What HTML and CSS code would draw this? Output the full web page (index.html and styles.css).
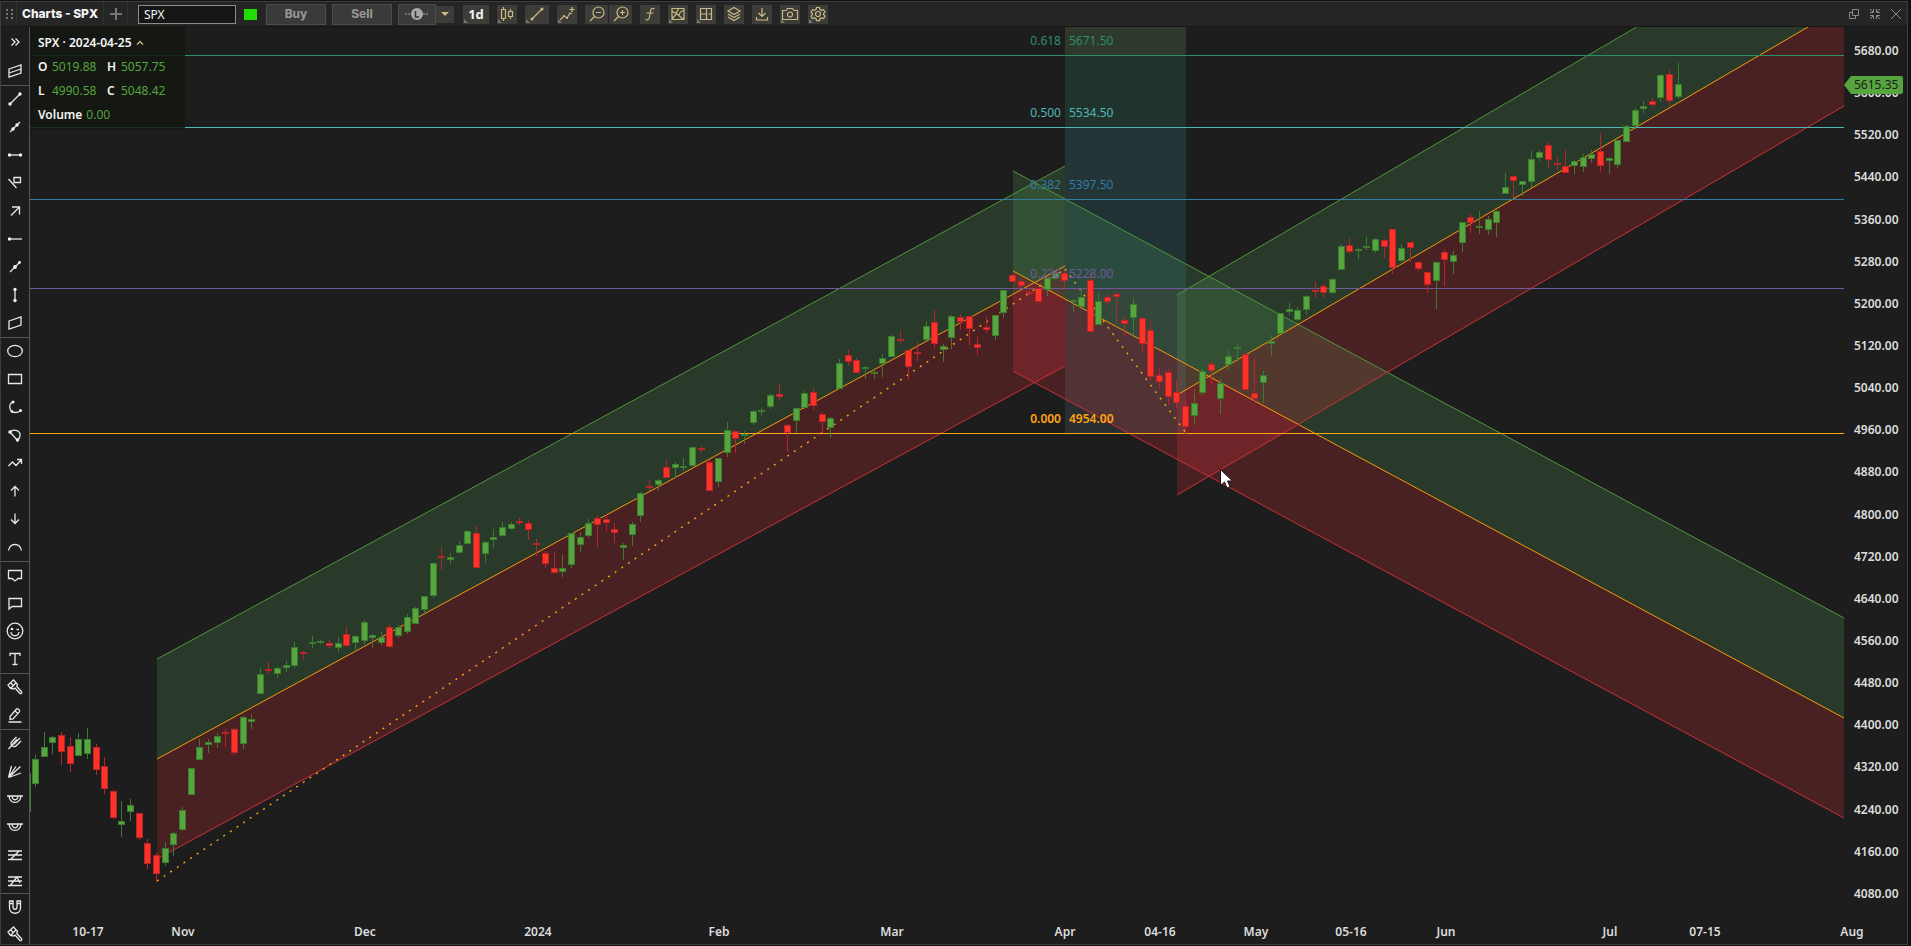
FILE: index.html
```html
<!DOCTYPE html>
<html lang="en">
<head>
<meta charset="utf-8">
<title>Charts - SPX</title>
<link rel="stylesheet" href="styles.css">
</head>
<body>
<div class="window">
  <header class="toolbar">
    <div class="tabs">
      <svg class="grip" width="8" height="12" viewBox="0 0 8 12"><path d="M0 1h2v2H0zM5 1h2v2H5zM0 5h2v2H0zM5 5h2v2H5zM0 9h2v2H0zM5 9h2v2H5z"/></svg>
      <h1 class="title">Charts - SPX</h1>
      <button class="add" aria-label="Add tab"><svg width="12" height="12" viewBox="0 0 12 12"><path d="M6 0v12M0 6h12"/></svg></button>
    </div>
    <input class="symbol" type="text" value="SPX" aria-label="Symbol">
    <span class="status"></span>
    <div class="trade">
      <button class="order">Buy</button>
      <button class="order">Sell</button>
      <div class="split">
        <button class="order limit" aria-label="Limit order"><svg width="24" height="12" viewBox="0 0 24 12"><path class="dash" d="M0 6h6M18 6h6"/><circle cx="12" cy="6" r="6"/><path class="mark" d="M10.500 3v6h3.500"/></svg></button>
        <button class="tool drop" aria-label="Order types"><svg width="8" height="4" viewBox="0 0 8 4"><path class="solid" d="M0 0h8L4 4z"/></svg></button>
      </div>
    </div>
    <div class="tools">
      <button class="tool period corner">1d</button>
      <button class="tool corner" aria-label="Chart type"><svg width="16" height="16" viewBox="0 0 16 16"><path d="M2.500 3.500h4v9h-4zM4.500 1v2.500M4.500 12.500V15M9.500 5.500h4v5h-4zM11.500 3v2.500M11.500 10.500V13"/></svg></button>
      <button class="tool line corner" aria-label="Draw line"><svg width="16" height="16" viewBox="0 0 16 16"><path d="M3 13L13 3"/><circle class="solid" cx="3" cy="13" r="1.500"/><circle class="solid" cx="13" cy="3" r="1.500"/></svg></button>
      <button class="tool corner" aria-label="Indicators"><svg width="16" height="16" viewBox="0 0 16 16"><path d="M1 14l4-4 3 2 3-5 2 1M13 1v5M10.500 3.500h5"/><circle class="solid" cx="5" cy="10" r="1"/><circle class="solid" cx="8" cy="12" r="1"/></svg></button>
      <div class="pair">
        <button class="tool wide" aria-label="Zoom out"><svg width="16" height="16" viewBox="0 0 16 16"><circle cx="9.500" cy="6.500" r="5.500"/><path d="M5.500 10.500l-4.500 4.500M7 6.500h5"/></svg></button>
        <button class="tool wide" aria-label="Zoom in"><svg width="16" height="16" viewBox="0 0 16 16"><circle cx="9.500" cy="6.500" r="5.500"/><path d="M5.500 10.500l-4.500 4.500M7 6.500h5M9.500 4v5"/></svg></button>
      </div>
      <button class="tool" aria-label="Functions"><svg width="16" height="16" viewBox="0 0 16 16"><path d="M12.500 3c-2-1.500-3.500-.5-4 2L7.500 11c-.5 2.500-2 3.500-4 2.500M4.500 7h7"/></svg></button>
      <button class="tool corner" aria-label="Images"><svg width="16" height="16" viewBox="0 0 16 16"><path d="M2 2.500h12v11H2zM2 13l4.500-5.500 7 6M2.500 5c2 3 4 3 6-2.500M9 9c1-3 2.500-4.500 5-4.500"/></svg></button>
      <button class="tool corner" aria-label="Layout"><svg width="16" height="16" viewBox="0 0 16 16"><path d="M2.500 2.500h11v11h-11zM8.500 2.500v11M2.500 8h6M10.500 8h3"/></svg></button>
      <button class="tool" aria-label="Layers"><svg width="16" height="16" viewBox="0 0 16 16"><path d="M8 1.500l6 3.500-6 3.500L2 5zM2 8l6 3.500L14 8M2 11l6 3.500 6-3.500"/></svg></button>
      <button class="tool" aria-label="Download"><svg width="16" height="16" viewBox="0 0 16 16"><path d="M8 2v8.500M4.500 7L8 10.500 11.500 7M2.500 11v3h11v-3"/></svg></button>
      <button class="tool corner" aria-label="Snapshot"><svg width="18" height="16" viewBox="0 0 18 16"><path d="M1.500 4.500H5L6.500 2.500h5L13 4.500h3.500v9h-15z"/><circle cx="9" cy="8.500" r="2.500"/></svg></button>
      <button class="tool corner" aria-label="Settings"><svg width="16" height="16" viewBox="0 0 16 16"><path d="M6.500 1.500h3l.5 2 1.500.8 2-.6 1.500 2.500-1.500 1.400v1l1.500 1.400-1.500 2.500-2-.6-1.500.8-.5 2h-3l-.5-2-1.500-.8-2 .6L1 10l1.500-1.400v-1L1 6.200l1.500-2.500 2 .6L6 3.500z"/><circle cx="8" cy="8" r="2.500"/></svg></button>
    </div>
    <div class="controls">
      <button aria-label="Restore"><svg width="12" height="12" viewBox="0 0 12 12"><path d="M4.500 1.500h6v6h-6zM4.500 4.500h-3v6h6v-3"/></svg></button>
      <button aria-label="Collapse"><svg width="12" height="12" viewBox="0 0 12 12"><path d="M1 1l3 3M4.500 1v3.500H1M11 1L8 4M7.500 1v3.500H11M1 11l3-3M1 7.500h3.500V11M11 11L8 8M7.500 11V7.500H11"/></svg></button>
      <button aria-label="Close"><svg width="12" height="12" viewBox="0 0 12 12"><path d="M1 1l10 10M11 1L1 11"/></svg></button>
    </div>
  </header>

  <div class="workspace">
    <nav class="sidebar" aria-label="Drawing tools">
      <div class="group">
        <button aria-label="Expand"><svg viewBox="0 0 16 16"><path d="M4.500 4.500L8 8l-3.500 3.500M8.500 4.500L12 8l-3.500 3.500"/></svg></button>
        <button aria-label="Regression channel"><svg viewBox="0 0 16 16"><path d="M2 6l12-4v8L2 14zM2 10l12-4"/></svg></button>
      </div>
      <div class="group">
        <button aria-label="Segment"><svg viewBox="0 0 16 16"><path d="M3 13L13 3"/><circle class="dot" cx="3" cy="13" r="1.700"/><circle class="dot" cx="13" cy="3" r="1.700"/></svg></button>
        <button aria-label="Extended line"><svg viewBox="0 0 16 16"><path d="M3 13L13 3"/><circle class="dot" cx="6" cy="10" r="1.700"/><circle class="dot" cx="10" cy="6" r="1.700"/></svg></button>
        <button aria-label="Horizontal segment"><svg viewBox="0 0 16 16"><path d="M2 8h12"/><circle class="dot" cx="2.500" cy="8" r="1.700"/><circle class="dot" cx="13.500" cy="8" r="1.700"/></svg></button>
        <button aria-label="Line with label"><svg viewBox="0 0 16 16"><path d="M1.500 4l8 9M7 2.500h6.500v5H7z"/></svg></button>
        <button aria-label="Arrow"><svg viewBox="0 0 16 16"><path d="M4 12.500l8-8M5 4h7.500v7.500"/></svg></button>
        <button aria-label="Ray"><svg viewBox="0 0 16 16"><path d="M2 8h13"/><circle class="dot" cx="2.500" cy="8" r="1.700"/></svg></button>
        <button aria-label="Infinite line"><svg viewBox="0 0 16 16"><path d="M3 13L13 3"/><circle class="dot" cx="8" cy="8" r="1.900"/><circle class="dot" cx="12.500" cy="3.500" r="1.400"/></svg></button>
        <button aria-label="Vertical segment"><svg viewBox="0 0 16 16"><path d="M8 2v12"/><circle class="dot" cx="8" cy="2.500" r="1.700"/><circle class="dot" cx="8" cy="13.500" r="1.700"/></svg></button>
        <button aria-label="Parallel channel"><svg viewBox="0 0 16 16"><path d="M2 6l12-4v8L2 14z"/></svg></button>
      </div>
      <div class="group">
        <button aria-label="Ellipse"><svg viewBox="0 0 16 16"><ellipse cx="8" cy="8" rx="7.300" ry="5.700"/></svg></button>
        <button aria-label="Rectangle"><svg viewBox="0 0 16 16"><path d="M1.500 3.500h13v9h-13z"/></svg></button>
        <button aria-label="Arc"><svg viewBox="0 0 16 16"><path d="M6 3C1 5 2 13 8 13.500c3 0 4.500-.5 5.500-2"/><circle class="dot" cx="6" cy="3" r="1.500"/><circle class="dot" cx="13.500" cy="11.500" r="1.500"/><circle class="dot" cx="5" cy="12.500" r="1.300"/></svg></button>
        <button aria-label="Curve"><svg viewBox="0 0 16 16"><path d="M3 5c4-4 11-1 10 4-.5 2-1 3-2.500 4.500z"/><circle class="dot" cx="3" cy="5" r="1.700"/><circle class="dot" cx="10.500" cy="13" r="1.700"/></svg></button>
        <button aria-label="Zigzag"><svg viewBox="0 0 16 16"><path d="M1.500 11l4-4 3.500 3.500L14 5M10 4.500h4.500V9"/></svg></button>
        <button aria-label="Arrow up"><svg viewBox="0 0 16 16"><path d="M8 13.500v-10M4 7.500l4-4 4 4"/></svg></button>
        <button aria-label="Arrow down"><svg viewBox="0 0 16 16"><path d="M8 2.500v10M4 8.500l4 4 4-4"/></svg></button>
        <button aria-label="Half circle"><svg viewBox="0 0 16 16"><path d="M1.500 11.500c1.500-8 11.500-8 13 0"/></svg></button>
      </div>
      <div class="group">
        <button aria-label="Callout"><svg viewBox="0 0 16 16"><path d="M1.500 3.500h13v8H11l-3 2.500-3-2.500H1.500z"/></svg></button>
        <button aria-label="Comment"><svg viewBox="0 0 16 16"><path d="M2 3.500h12.500v8H5L2 14z"/></svg></button>
        <button aria-label="Emoji"><svg class="large" viewBox="0 0 18 18"><circle cx="9" cy="9" r="7.800"/><path d="M5 10c.5 5 7.500 5 8 0M10.500 7.500H13"/><circle class="dot" cx="6" cy="7" r="1.300"/></svg></button>
        <button aria-label="Text"><svg viewBox="0 0 16 16"><path d="M3 5V2.500h10V5M8 2.500v11M5.500 13.500h5"/></svg></button>
      </div>
      <div class="group">
        <button aria-label="Brush"><svg viewBox="0 0 16 16"><path d="M1 6l2.500 3.500 3 .5 1.500-1 4.500 5c1.500 1.500 3-.2 1.800-1.500L9.800 7.500l.7-2L6.500 1zM3.500 9.500L9 3.800M3.500 3.500l2.500 3"/></svg></button>
        <button aria-label="Edit"><svg viewBox="0 0 16 16"><path d="M3 12.500V9.500l6.500-7.500c1-1 4 1.500 3 2.700L6 12zM8 4l3.200 2.800M1.500 15h13"/></svg></button>
      </div>
      <div class="group">
        <button aria-label="Pitchfork"><svg viewBox="0 0 16 16"><path d="M1.500 14L10 4.500M9.500 2L5 6.500c-2 2-1 3 0 4s2.500 2 4.500 0L14 6M6.500 9.500L13 3"/></svg></button>
        <button aria-label="Fan"><svg viewBox="0 0 16 16"><path d="M1.500 14.500L4.500 3M1.500 14.500L9 3.500M1.500 14.500l12-11M1.500 14.500L14 10"/></svg></button>
        <button aria-label="Arcs"><svg viewBox="0 0 16 16"><path d="M0 5h16M2 5c1 8.500 11 8.500 12 0M5 5c.5 5 5.500 5 6 0"/></svg></button>
        <button aria-label="Circles"><svg viewBox="0 0 16 16"><path d="M0 5h16M2 5c1 8.500 11 8.500 12 0M5 5c.5 5 5.500 5 6 0"/></svg></button>
        <button aria-label="Retracement"><svg viewBox="0 0 16 16"><path d="M1 4h14M1 8h14M1 12.500h14M4 12L12 4"/></svg></button>
        <button class="short" aria-label="Extension"><svg viewBox="0 0 16 16"><path d="M1 4h14M1 8h14M1 12.500h14M3.500 12L10 4l3 6"/></svg></button>
      </div>
      <div class="group">
        <button aria-label="Magnet"><svg viewBox="0 0 16 16"><path d="M2.500 2h3.500v6c0 3 4 3 4 0V2h3.500v7c0 7-11 7-11 0zM2.500 4.500H6M10 4.500h3.500"/></svg></button>
        <button aria-label="Clear"><svg viewBox="0 0 16 16"><path d="M1 6l2.500 3.500 3 .5 1.500-1 4.500 5c1.500 1.500 3-.2 1.800-1.500L9.800 7.500l.7-2L6.500 1zM3.500 9.500L9 3.800M3.500 3.500l2.500 3"/></svg></button>
      </div>
    </nav>

    <main class="chart">
      <div class="panes">
        <div class="plot">
          <svg id="plot" class="canvas"></svg>
          <section class="legend">
            <h2>SPX · 2024-04-25 <svg width="8" height="6" viewBox="0 0 8 6"><path d="M1 4.500l3-3 3 3"/></svg></h2>
            <dl>
              <div><dt>O</dt><dd>5019.88</dd></div>
              <div><dt>H</dt><dd>5057.75</dd></div>
              <div><dt>L</dt><dd>4990.58</dd></div>
              <div><dt>C</dt><dd>5048.42</dd></div>
              <div class="volume"><dt>Volume</dt><dd>0.00</dd></div>
            </dl>
          </section>
        </div>
        <aside class="prices">
          <div id="prices" class="scale"></div>
          <div class="tag"><svg width="7" height="18" viewBox="0 0 7 18"><path d="M7 0L0 9l7 9z"/></svg><span>5615.35</span></div>
        </aside>
      </div>
      <div id="times" class="times"></div>
    </main>
  </div>
</div>
<script src="chart.js"></script>
</body>
</html>
```
FILE: styles.css
```css
* { box-sizing: border-box; }

body {
  margin: 0;
  height: 100vh;
  padding: 1px 3px 1px 0;
  background: #131313;
  color: #f4f4f4;
  font: 12px/16px "Noto Sans", "Open Sans", sans-serif;
  overflow: hidden;
}

button {
  margin: 0;
  padding: 0;
  border: 0;
  background: none;
  color: inherit;
  font: inherit;
  display: flex;
  align-items: center;
  justify-content: center;
}

svg { display: block; fill: none; }
h1, h2, dl, dd { margin: 0; font-size: 12px; }

.window {
  height: 100%;
  display: flex;
  flex-direction: column;
  border: 1px solid #3c3c3c;
  background: #1d1d1d;
}

/* Toolbar */
.toolbar {
  height: 25px;
  flex: none;
  display: flex;
  align-items: center;
  border-bottom: 1px solid #151515;
  background: #252525;
}
.tabs { display: flex; align-items: center; height: 100%; width: 137px; flex: none; }
.grip { margin-left: 5px; fill: #777; flex: none; }
.title {
  margin-left: 2px;
  padding: 0 5px;
  line-height: 24px;
  font-family: Inter, sans-serif;
  font-weight: 800;
  white-space: nowrap;
  border: solid #2c3432;
  border-width: 0 1px;
}
.add { width: 24px; height: 24px; border-right: 1px solid #2c3432; }
.add svg { stroke: #777; stroke-width: 2; }
.symbol {
  width: 98px;
  height: 19px;
  padding: 0 5px;
  border: 1px solid #8c8c8c;
  background: #151515;
  color: #f4f4f4;
  font: 12px/16px "Noto Sans", sans-serif;
}
.status { width: 13px; height: 11px; margin: 0 9px 0 8px; background: #22dd00; }
.trade { display: flex; align-items: center; gap: 6px; }
.order {
  width: 60px;
  height: 21px;
  border: 1px solid #4c4c4c;
  background: #3a3a3a;
  color: #9a9a9a;
  font: 700 12px/16px Inter, sans-serif;
}
.split { display: flex; align-items: center; }
.limit { width: 38px; }
.limit circle { fill: #aaa; }
.limit .dash { stroke: #aaa; stroke-dasharray: 2 1; }
.limit .mark { stroke: #333; stroke-width: 1.5; }
.tools { display: flex; gap: 8px; margin-left: 9px; }
.pair { display: flex; gap: 1px; }
.tool {
  position: relative;
  width: 20px;
  height: 19px;
  background: #3c3d39;
}
.tool svg { stroke: #cdb985; stroke-width: 1.2; }
.tool .solid { fill: #cdb985; stroke: none; }
.tool.wide { width: 23px; }
.tool.line { width: 24px; }
.drop { width: 18px; height: 17px; }
.period { width: 26px; font-weight: 700; font-size: 13px; }
.corner::after {
  content: "";
  position: absolute;
  left: 1px;
  bottom: 1px;
  border: 2px solid transparent;
  border-left-color: #777;
  border-bottom-color: #777;
}
.controls { display: flex; gap: 9px; margin-left: auto; padding-right: 5px; }
.controls svg { stroke: #8c8c8c; }

/* Drawing tools */
.workspace { flex: 1; min-height: 0; display: flex; }
.sidebar { width: 29px; flex: none; border-right: 1px solid #555; }
.group { border-bottom: 1px solid #555; margin-bottom: -1px; }
.group:last-child { border-bottom: 0; }
.group button { width: 28px; height: 28px; }
.group:first-child button { height: 29px; }
.group:last-child button { height: 27px; }
.group .short { height: 24px; }
.group svg { width: 16px; height: 16px; stroke: #e8e8e8; stroke-width: 1.3; }
.group .large { width: 18px; height: 18px; }
.group .dot { fill: #f4f4f4; stroke: none; }

/* Chart */
.chart { flex: 1; min-width: 0; display: flex; flex-direction: column; }
.panes { flex: 1; min-height: 0; display: flex; }
.plot { position: relative; flex: 1; min-width: 0; }
.canvas { width: 100%; height: 100%; position: absolute; }
.canvas text { font: 12px "Noto Sans", sans-serif; }
.canvas .base { font-weight: 600; }
.up { fill: rgba(90, 175, 95, 0.2); }
.down { fill: rgba(255, 48, 60, 0.2); }
.edge { stroke-width: 1; }
.upper { stroke: #4f963e; }
.middle { stroke: #f59b0c; }
.lower { stroke: #cc3038; }
.trend { stroke: #ffa510; stroke-width: 1.4; stroke-dasharray: 2 6; }
.candles { shape-rendering: crispEdges; }
.bull { fill: #3c7a30; }
.bull-body { fill: #56a53e; }
.bear { fill: #b8242c; }
.bear-body { fill: #ff3228; }
.cursor { fill: #fff; stroke: #111; }

.legend {
  position: absolute;
  top: 0;
  left: 0;
  width: 155px;
  height: 103px;
  padding: 4px 8px;
  background: rgba(20, 22, 18, 0.85);
  line-height: 24px;
}
.legend h2 { display: flex; align-items: center; gap: 4px; font-weight: 600; }
.legend h2 svg { stroke: #cdb985; stroke-width: 1.4; }
.legend dl { display: grid; grid-template-columns: 69px 69px; }
.legend dl div { display: flex; gap: 4px; }
.legend .volume { grid-column: span 2; }
.legend dt { font-weight: 600; min-width: 10px; }
.legend dd { color: #56a53e; }

.prices { position: relative; width: 63px; flex: none; }
.scale {
  height: 100%;
  padding: 16px 0 14px 10px;
  display: flex;
  flex-direction: column;
  justify-content: space-between;
  font-weight: 600;
  color: #dcdcdc;
}
.tag {
  position: absolute;
  top: 49px;
  left: 0;
  display: flex;
}
.tag svg { fill: #56a53e; }
.tag span {
  width: 52px;
  padding-left: 3px;
  line-height: 18px;
  border-radius: 0 2px 2px 0;
  background: #56a53e;
  color: #1d1d1d;
}
.times {
  position: relative;
  height: 28px;
  margin-right: 63px;
  flex: none;
  font-weight: 600;
  color: #dcdcdc;
}
.times span {
  position: absolute;
  top: 8px;
  transform: translateX(-50%);
}
```
FILE: chart.js
```js
const VIEW = { x: 30, y: 27, w: 1814, h: 889 };
const STEP = 8.646;
const FIRST = 35.5;

// Each candle: direction, high, body top, body bottom, low
const candles = `
g 755 759 784 787|g 732 747 757 757|g 736 737 743 754|r 732 735 752 765|r 737 746 764 772
g 733 739 756 756|g 728 739 754 759|r 744 747 770 775|r 757 766 789 794|r 790 791 818 819
g 801 821 825 837|g 799 805 812 821|r 813 813 838 840|r 839 843 864 869|r 853 855 874 882
g 842 848 863 866|g 832 833 845 856|g 807 810 830 831|g 768 768 795 795|g 739 747 760 760
g 739 742 745 753|g 733 736 743 748|r 729 732 734 747|r 728 729 753 755|g 716 717 744 749
g 714 719 722 729|g 668 674 694 694|r 662 669 671 674|g 667 668 674 678|g 661 665 668 672
g 642 647 666 668|r 651 652 654 659|g 636 642 644 648|g 640 641 643 644|r 640 643 646 648
g 637 643 648 652|r 627 634 646 647|g 635 636 643 652|g 620 622 641 644|g 634 635 638 648
g 632 637 643 645|r 624 627 647 649|g 625 627 636 638|g 614 617 632 634|g 607 608 624 624
g 596 596 610 615|g 562 563 596 598|r 547 556 558 570|g 553 557 560 564|g 541 545 553 553
g 530 531 544 544|r 526 533 568 568|g 541 542 554 563|g 529 537 540 548|g 522 527 536 536
g 522 524 529 530|r 518 521 523 525|r 520 523 530 540|r 539 543 545 556|r 551 553 564 568
r 553 568 573 573|g 555 568 572 577|g 533 533 565 568|g 532 537 545 552|g 519 523 536 538
r 515 518 525 547|r 514 519 523 531|r 523 529 533 543|g 543 545 548 560|g 522 524 535 546
g 492 493 516 522|r 479 486 488 491|g 479 480 485 491|r 460 467 478 478|g 462 464 468 478
g 458 466 468 471|g 447 447 466 467|r 446 448 450 453|r 460 462 491 491|g 458 458 482 487
g 422 430 453 457|r 431 431 439 453|g 431 434 436 444|g 410 411 423 425|g 408 410 412 416
g 394 395 407 409|r 384 394 397 400|r 424 425 433 452|g 408 408 421 433|g 391 393 408 409
r 388 392 406 410|r 412 414 422 433|g 417 418 428 438|g 359 363 389 389|r 350 355 362 366
r 358 360 373 373|g 366 367 369 379|g 368 372 374 379|g 354 358 364 377|g 335 336 357 357
r 331 339 341 343|r 349 350 367 380|r 342 352 354 361|g 321 326 340 340|r 310 322 344 348
g 344 346 350 362|g 315 316 338 349|r 314 317 322 330|r 316 316 329 345|r 337 344 348 355
r 316 327 330 333|g 315 315 336 340|g 290 290 313 318|r 273 275 282 282|r 279 281 286 288
r 288 292 294 295|r 288 288 302 302|g 277 278 290 296|g 272 273 279 279|r 271 273 281 289
g 299 300 302 312|g 289 297 307 307|r 274 280 332 332|g 293 301 325 325|r 294 297 302 305
r 291 294 297 324|r 316 320 324 336|g 298 304 318 337|r 317 318 344 352|r 321 330 377 381
r 367 375 382 388|r 369 372 397 405|r 380 392 403 409|r 399 406 427 434|g 389 403 416 425
g 369 371 393 395|r 361 364 371 384|g 379 383 399 414|g 349 356 365 370|g 345 347 349 362
r 351 354 390 390|r 358 393 399 402|g 371 375 383 403|g 335 341 344 356|g 313 313 334 334
g 303 309 312 315|g 307 310 320 321|g 295 296 310 315|r 282 290 292 298|r 284 286 293 298
g 278 279 293 294|g 244 246 270 270|r 238 245 252 254|g 248 249 251 259|g 237 246 248 250
g 238 239 251 253|r 239 240 247 258|r 229 229 268 274|g 244 248 261 262|r 242 242 248 262
r 261 262 269 271|r 272 272 285 293|g 261 262 281 309|r 249 252 260 286|g 251 255 262 274
g 222 222 243 252|r 214 217 223 233|g 211 226 228 234|g 216 219 230 235|g 210 211 223 237
g 173 187 194 194|r 175 176 181 198|g 181 181 185 196|g 151 159 182 188|g 150 152 158 161
r 142 145 160 169|r 157 163 165 170|r 150 166 173 173|g 160 161 166 174|g 154 157 167 172
g 150 154 159 163|r 133 151 166 172|g 157 158 161 174|g 140 140 165 168|g 125 126 142 142
g 108 110 126 129|g 101 106 109 113|r 98 101 105 107|g 74 75 98 101|r 70 74 101 106
g 63 84 97 99`.trim().split(/[|\n]/).map(row => row.trim().split(" "));

// Channels: start x, upper y at start, end x, upper y at end; bands are 100 deep each
const channels = [
  [157, 659, 1065, 166],
  [1013, 171, 1844, 618],
  [1177, 295, 1844, -94]
];

const levels = [
  { ratio: "0.618", price: "5671.50", y: 55, color: "#2c9066" },
  { ratio: "0.500", price: "5534.50", y: 127, color: "#4fb8b4" },
  { ratio: "0.382", price: "5397.50", y: 199, color: "#337ca6" },
  { ratio: "0.236", price: "5228.00", y: 288, color: "#70589c" },
  { ratio: "0.000", price: "4954.00", y: 433, color: "#ffa510", cls: "base" }
];
const zones = [
  [27, 55, "150,220,130"],
  [55, 127, "55,180,140"],
  [127, 199, "80,195,205"],
  [199, 288, "60,175,190"],
  [288, 433, "120,150,160"]
];

let art = "";
const line = (cls, x1, y1, x2, y2) =>
  `<line class="${cls}" x1="${x1}" y1="${y1}" x2="${x2}" y2="${y2}"/>`;

for (const [x1, y1, x2, y2] of channels) {
  const band = (cls, d) =>
    `<polygon class="${cls}" points="${x1},${y1 + d} ${x2},${y2 + d} ${x2},${y2 + d + 100} ${x1},${y1 + d + 100}"/>`;
  art += band("up", 0) + band("down", 100);
}
for (const [top, bottom, rgb] of zones) {
  art += `<rect x="1065" y="${top}" width="121" height="${bottom - top}" fill="rgba(${rgb},0.15)"/>`;
}
for (const [x1, y1, x2, y2] of channels) {
  art += line("edge upper", x1, y1, x2, y2);
  art += line("edge middle", x1, y1 + 100, x2, y2 + 100);
  art += line("edge lower", x1, y1 + 200, x2, y2 + 200);
}
art += line("trend", 157, 881, 1065, 269) + line("trend", 1065, 269, 1186, 433);
for (const { y, color } of levels) {
  art += `<rect x="30" y="${y}" width="1814" height="1" fill="${color}"/>`;
}

art += '<g class="candles"><rect class="bull" x="30" y="773" width="1" height="39"/>';
candles.forEach(([dir, high, top, bottom, low], i) => {
  const cls = dir === "g" ? "bull" : "bear";
  const x = Math.floor(FIRST + STEP * i);
  art += `<rect class="${cls}" x="${x}" y="${high}" width="1" height="${low - high}"/>`;
  art += `<rect class="${cls}" x="${x - 3}" y="${top}" width="7" height="${bottom - top}"/>`;
  if (bottom - top > 2) {
    art += `<rect class="${cls}-body" x="${x - 2}" y="${+top + 1}" width="5" height="${bottom - top - 2}"/>`;
  }
});
art += "</g>";
art += '<path class="cursor" d="M1220.500 469.500v16l4-3.500 2.500 6 3-1.500-2.500-5.500h5z"/>';

const px = x => ((x - VIEW.x) / VIEW.w * 100).toFixed(3) + "%";
const py = y => ((y - VIEW.y) / VIEW.h * 100).toFixed(3) + "%";
const labels = levels.map(({ ratio, price, y, color, cls = "level" }) =>
  `<text class="${cls}" x="${px(1061)}" y="${py(y - 10)}" text-anchor="end" fill="${color}">${ratio}</text>` +
  `<text class="${cls}" x="${px(1069)}" y="${py(y - 10)}" fill="${color}">${price}</text>`).join("");

document.getElementById("plot").innerHTML =
  `<svg width="100%" height="100%" viewBox="${VIEW.x} ${VIEW.y} ${VIEW.w} ${VIEW.h}" preserveAspectRatio="none">${art}</svg>${labels}`;

let scale = "";
for (let p = 5680; p >= 4080; p -= 80) scale += `<span>${p}.00</span>`;
document.getElementById("prices").innerHTML = scale;

const times = [
  ["10-17", 88], ["Nov", 183], ["Dec", 365], ["2024", 538], ["Feb", 719], ["Mar", 892],
  ["Apr", 1065], ["04-16", 1160], ["May", 1256], ["05-16", 1351], ["Jun", 1446],
  ["Jul", 1610], ["07-15", 1705], ["Aug", 1852]
];
document.getElementById("times").innerHTML =
  times.map(([t, x]) => `<span style="left:${px(x)}">${t}</span>`).join("");
```
